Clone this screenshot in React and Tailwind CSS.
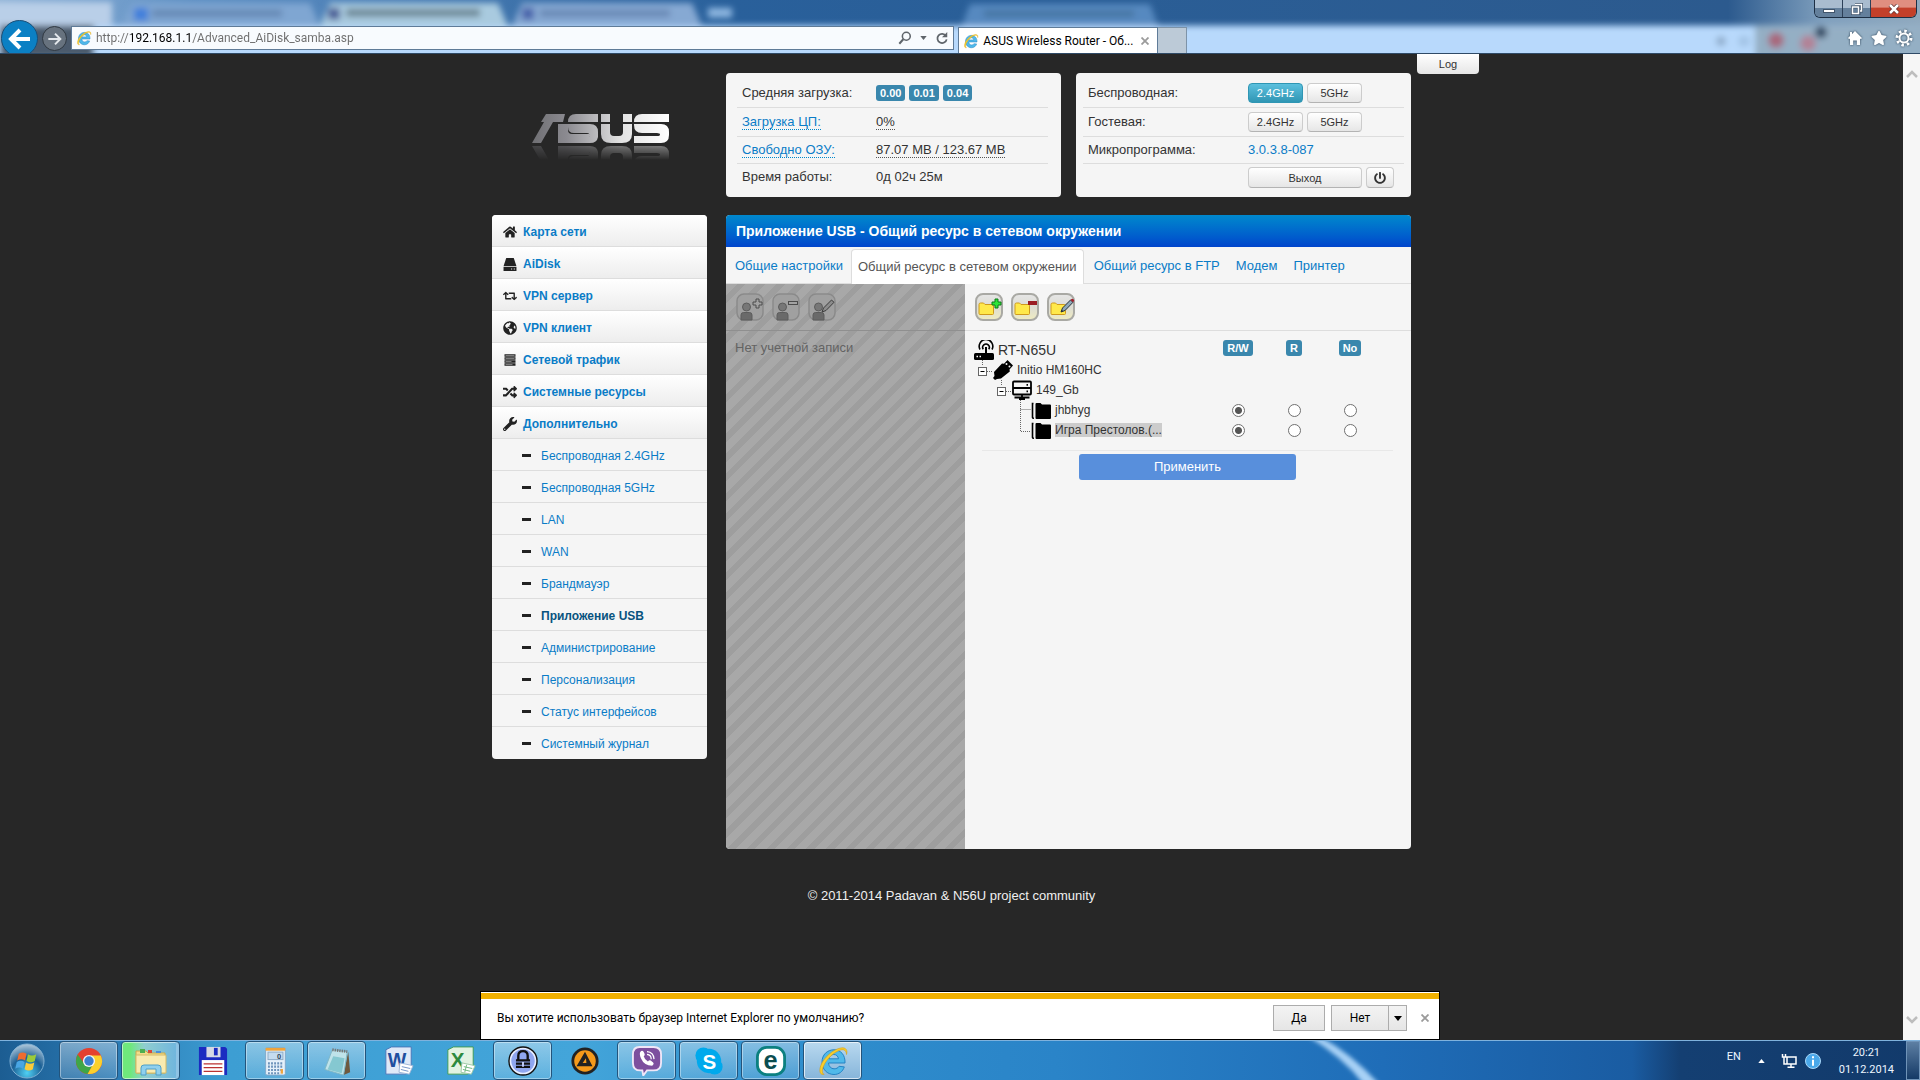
import React from "react";
import { FaHome, FaRetweet, FaGlobeAmericas, FaRandom, FaWrench, FaPowerOff, FaStar } from "react-icons/fa";

const ieFont = "font-['Roboto','Noto_Sans',sans-serif]";

function IeIcon({ className }) {
  return (
    <svg viewBox="0 0 32 32" className={className} aria-hidden="true">
      <path
        d="M28 18H11.500c.3 3.600 2.600 5.800 5.600 5.800 2.300 0 4-.9 5-2.500l5.200.6C25.700 26.600 22 29.500 17 29.500 10.200 29.500 5 24.200 5 17S10.200 4.800 17 4.800 28.400 10 28 18zM11.800 13.800h9.700c-.4-2.700-2.200-4.300-4.800-4.300s-4.400 1.600-4.900 4.300z"
        fill="#4fb9ea"
        stroke="#2583c4"
        strokeWidth="1"
      />
      <path
        d="M29.500 9.500c1.300-4-.4-7.300-5.200-6.600C16 4 6.500 13 3.800 20.500 1.800 26 3 30.500 7.200 29.300c-2.300-.6-2.400-4-.6-8.300C9.800 13.500 17.600 6.500 23.800 4.900c3.400-.9 5.600.8 5.700 4.600z"
        fill="#f8cf2c"
        stroke="#d69c12"
        strokeWidth=".6"
      />
    </svg>
  );
}

/* ---------- Browser frame ---------- */

function GlassBackdrop() {
  return (
    <svg className="absolute inset-0 h-full w-full" viewBox="0 0 1920 54" preserveAspectRatio="none" aria-hidden="true">
      <defs>
        <linearGradient id="glassTop" x1="0" x2="1">
          <stop offset="0" stopColor="#8fb2d6" />
          <stop offset=".1" stopColor="#5f90c4" />
          <stop offset=".38" stopColor="#29609b" />
          <stop offset=".9" stopColor="#2c5a8e" />
          <stop offset=".95" stopColor="#7f9fbd" />
          <stop offset="1" stopColor="#8fa9be" />
        </linearGradient>
        <filter id="soft" x="-10%" y="-60%" width="120%" height="220%">
          <feGaussianBlur stdDeviation="3" />
        </filter>
      </defs>
      <rect width="1920" height="54" fill="url(#glassTop)" />
      <g filter="url(#soft)">
        <rect x="-10" y="26" width="2000" height="40" fill="#b8d9fc" />
        <rect x="1755" y="26" width="200" height="40" fill="#94afc4" />
        <path d="M-10 2h122v24H-10z" fill="#b9cfe8" />
        <path d="M132 3h178l10 24H122z" fill="#7fa6d2" />
        <path d="M330 3h168l10 24H320z" fill="#a9cadf" />
        <path d="M522 3h170l10 24H512z" fill="#86a9d3" />
        <path d="M970 4h180l8 22H962z" fill="#5689c0" />
        <rect x="134" y="8" width="14" height="13" fill="#3f7fdb" />
        <rect x="152" y="10" width="130" height="7" fill="#6587b3" />
        <rect x="328" y="8" width="12" height="12" fill="#4b5f98" />
        <rect x="346" y="9" width="134" height="8" fill="#6d8796" />
        <rect x="522" y="8" width="12" height="12" fill="#4a64ab" />
        <rect x="540" y="10" width="130" height="7" fill="#6887b4" />
        <rect x="708" y="8" width="24" height="10" fill="#8db6e0" />
        <rect x="984" y="11" width="150" height="6" fill="#44729f" />
        <rect x="0" y="26" width="94" height="34" fill="#4b5a6c" />
        <circle cx="1721" cy="42" r="5" fill="#8faccb" />
        <circle cx="1744" cy="42" r="6" fill="#a3c4e6" />
        <circle cx="1776" cy="41" r="8" fill="#a8677c" />
        <circle cx="1808" cy="44" r="8" fill="#b28296" />
        <circle cx="1821" cy="33" r="6" fill="#2f4560" />
      </g>
    </svg>
  );
}

function WindowButtons() {
  return (
    <div className="absolute right-[3px] top-0 flex h-[18px] w-[103px] overflow-hidden rounded-b-md border border-t-0 border-[#1d2f44]">
      <button type="button" aria-label="Свернуть" className="flex w-7 items-end justify-center border-r border-[#2c4058] bg-linear-to-b from-[#a9bccf] from-50% to-[#64809c] to-50% pb-1">
        <span className="h-1 w-3 border border-[#41556b] bg-white" />
      </button>
      <button type="button" aria-label="Развернуть" className="flex w-7 items-center justify-center border-r border-[#2c4058] bg-linear-to-b from-[#a9bccf] from-50% to-[#64809c] to-50%">
        <svg viewBox="0 0 12 12" className="size-3" fill="none">
          <path d="M4 1h7v7H9M1 4h7v7H1z" stroke="#41556b" strokeWidth="3" />
          <path d="M4 1.500h6.500V8H9M1.500 4h6v6.500h-6z" stroke="#fff" strokeWidth="1.500" />
        </svg>
      </button>
      <button type="button" aria-label="Закрыть окно" className="flex flex-1 items-center justify-center bg-linear-to-b from-[#e08f80] from-40% to-[#c3402a] to-50%">
        <svg viewBox="0 0 12 10" className="h-2.5 w-3" fill="none">
          <path d="M2 1l8 8M10 1L2 9" stroke="#5b2b2b" strokeWidth="4" />
          <path d="M2 1l8 8M10 1L2 9" stroke="#fff" strokeWidth="2.500" />
        </svg>
      </button>
    </div>
  );
}

function BrowserBar() {
  return (
    <header className={`relative h-[54px] shrink-0 overflow-hidden border-b border-[#2f4a66] text-xs ${ieFont}`}>
      <GlassBackdrop />
      <WindowButtons />
      <div className="relative flex h-full items-end pt-5">
        <button type="button" aria-label="Назад" className="ml-px -mb-1 flex size-[37px] shrink-0 items-center justify-center rounded-full border border-[#1a4f77] bg-[#0b80c4]">
          <svg viewBox="0 0 24 24" className="size-6" fill="none" stroke="#fff" strokeWidth="4">
            <path d="M22 12H4M12 3l-9 9 9 9" />
          </svg>
        </button>
        <button type="button" aria-label="Вперёд" className="mb-0.5 ml-1 flex size-[25px] shrink-0 items-center justify-center rounded-full border border-[#2f3841] bg-[#67727e]">
          <svg viewBox="0 0 24 24" className="size-4" fill="none" stroke="#e4e8ec" strokeWidth="3">
            <path d="M2 12h18M12 4l8 8-8 8" />
          </svg>
        </button>
        <form className="mb-[3px] ml-1 flex h-6 w-[46%] items-center gap-1 border border-[#5f7b98] bg-[#f8fbfe] px-1" onSubmit={(e) => e.preventDefault()}>
          <IeIcon className="size-4 shrink-0" />
          <input
            type="text"
            aria-label="Адрес"
            defaultValue="http://192.168.1.1/Advanced_AiDisk_samba.asp"
            className="min-w-0 flex-1 bg-[linear-gradient(90deg,#6d6d6d_0_35px,#000_35px_94px,#6d6d6d_94px)] bg-clip-text text-transparent outline-none"
          />
          <button type="button" aria-label="Поиск">
            <svg viewBox="0 0 16 16" className="size-3.5" fill="none" stroke="#5f656b" strokeWidth="1.800">
              <circle cx="9.500" cy="6" r="4.500" />
              <path d="M6 9.500L1.500 14.500" strokeWidth="2.400" />
            </svg>
          </button>
          <button type="button" aria-label="Список адресов" className="px-1">
            <svg viewBox="0 0 8 5" className="h-1 w-[7px]"><path d="M0 0h8L4 5z" fill="#5f656b" /></svg>
          </button>
          <button type="button" aria-label="Обновить">
            <svg viewBox="0 0 16 16" className="size-3.5" fill="none" stroke="#5f656b" strokeWidth="2">
              <path d="M12.500 5.500A5.300 5.300 0 1 0 13.300 9.500" />
              <path d="M14 1v6H8z" fill="#5f656b" stroke="none" />
            </svg>
          </button>
        </form>
        <div className="ml-1 flex h-[26px] w-[200px] shrink-0 items-center gap-1 border-x border-t border-[#5f7b98] bg-white px-1">
          <IeIcon className="size-4 shrink-0" />
          <span className="flex-1 whitespace-nowrap text-black">ASUS Wireless Router - Об...</span>
          <button type="button" aria-label="Закрыть вкладку" className="px-1">
            <svg viewBox="0 0 8 8" className="size-2" stroke="#9b9b9b" strokeWidth="1.800"><path d="M.5.5l7 7M7.500.5l-7 7" /></svg>
          </button>
        </div>
        <button type="button" aria-label="Новая вкладка" className="h-[26px] w-[29px] border-r border-t border-[#7d93a8] bg-[#bccad7]" />
        <nav className="mb-1.5 ml-auto mr-[7px] flex items-center gap-2 text-white">
          <button type="button" aria-label="Домой">
            <svg viewBox="0 0 16 16" className="size-4 drop-shadow-[0_0_1px_#23384d]" fill="#fff">
              <path d="M8 1l7 7-1.200 1.200L13 8.500V15H9.800v-4.500H6.200V15H3V8.500l-.8.7L1 8l2-2V2h2v2z" />
            </svg>
          </button>
          <button type="button" aria-label="Избранное"><FaStar className="size-4 drop-shadow-[0_0_1px_#23384d]" /></button>
          <button type="button" aria-label="Сервис">
            <svg viewBox="0 0 18 18" className="size-[18px] drop-shadow-[0_0_1px_#23384d]" fill="none" stroke="#fff">
              <circle cx="9" cy="9" r="4.500" strokeWidth="2" />
              <circle cx="9" cy="9" r="7" strokeWidth="3" strokeDasharray="2.500 3" />
            </svg>
          </button>
        </nav>
      </div>
    </header>
  );
}

/* ---------- Router page ---------- */

function AsusLogo() {
  const mark = (
    <>
      <path d="M14 0H33L31 8H21L9 29H0L12 8H9Z" />
      <path d="M26 10h10v6q0 4 4 4h17q2 0 2 1.500T57 23H26Z" />
      <path d="M26 23h40q-1 6-8 6H26z" />
      <path d="M36 8q0-8 8-8H66V8z" />
      <path d="M36 10H58q8 0 8 8v5H58q0-4-3-4H42q-6 0-6-6z" />
      <path d="M69 0h9v8h-9zM91 0h9v8h-9z" />
      <path d="M69 10h9v8q0 4 4 4h5q4 0 4-4v-8h9v10q0 9-10 9H79q-10 0-10-9z" />
      <path d="M102 8q0-8 8-8h27v8z" />
      <path d="M102 10h27q8 0 8 8v3q0 8-8 8h-27v-7h23q3 0 3-1.500T125 19h-15q-8 0-8-8z" />
    </>
  );
  return (
    <svg viewBox="0 0 138 46" className="h-[46px] w-[138px]" role="img" aria-label="ASUS">
      <defs>
        <linearGradient id="chrome" gradientUnits="userSpaceOnUse" x1="0" y1="0" x2="137" y2="0">
          <stop offset="0" stopColor="#6f6f73" />
          <stop offset=".25" stopColor="#8b8a90" />
          <stop offset=".65" stopColor="#e2e2e2" />
          <stop offset="1" stopColor="#ffffff" />
        </linearGradient>
        <linearGradient id="fade" gradientUnits="userSpaceOnUse" x1="0" y1="30" x2="0" y2="46">
          <stop offset="0" stopColor="#fff" stopOpacity=".45" />
          <stop offset="1" stopColor="#fff" stopOpacity="0" />
        </linearGradient>
        <mask id="reflect"><rect y="30" width="138" height="16" fill="url(#fade)" /></mask>
      </defs>
      <g fill="url(#chrome)">{mark}</g>
      <g mask="url(#reflect)"><g fill="url(#chrome)" transform="translate(0 61) scale(1 -1)">{mark}</g></g>
    </svg>
  );
}

const btn = "rounded border border-[#ccc] border-b-[#b3b3b3] bg-linear-to-b from-white to-[#e6e6e6] text-[11px] leading-4 text-[#333]";
const badge = "rounded-[3px] bg-[#3a87ad] px-1 text-[11px] leading-4 font-bold text-white";
const cell = "border-b border-[#ddd]";

function StatusPanel() {
  return (
    <section className="rounded bg-[#f5f5f5] py-1.5 pl-[11px] pr-[13px]">
      <table className="w-full border-separate border-spacing-0 text-left text-[13px]">
        <tbody>
          <tr className="h-[29px]">
            <th scope="row" className={`w-[139px] pl-[5px] font-normal ${cell}`}>Средняя загрузка:</th>
            <td className={cell}>
              <span className="flex gap-1">
                <span className={badge}>0.00</span>
                <span className={badge}>0.01</span>
                <span className={badge}>0.04</span>
              </span>
            </td>
          </tr>
          <tr className="h-[29px]">
            <th scope="row" className={`pl-[5px] font-normal ${cell}`}><a href="#cpu" className="border-b border-dotted border-[#0088cc] text-[#0a7cc7]">Загрузка ЦП:</a></th>
            <td className={cell}><span className="border-b border-dotted border-[#555]">0%</span></td>
          </tr>
          <tr className="h-[27px]">
            <th scope="row" className={`pl-[5px] font-normal ${cell}`}><a href="#ram" className="border-b border-dotted border-[#0088cc] text-[#0a7cc7]">Свободно ОЗУ:</a></th>
            <td className={cell}><span className="border-b border-dotted border-[#555]">87.07 MB / 123.67 MB</span></td>
          </tr>
          <tr className="h-[27px]">
            <th scope="row" className="pb-0.5 pl-[5px] font-normal">Время работы:</th>
            <td className="pb-0.5">0д 02ч 25м</td>
          </tr>
        </tbody>
      </table>
    </section>
  );
}

function WirelessPanel() {
  return (
    <section className="rounded bg-[#f5f5f5] px-[7px] py-1.5">
      <table className="w-full border-separate border-spacing-0 text-left text-[13px]">
        <tbody>
          <tr className="h-[29px]">
            <th scope="row" className={`w-[165px] pl-[5px] font-normal ${cell}`}>Беспроводная:</th>
            <td className={cell}>
              <span className="flex gap-1">
                <button type="button" className="h-5 w-[55px] rounded border border-[#2f96b4] bg-linear-to-b from-[#5bc0de] to-[#2f96b4] text-[11px] leading-4 text-white">2.4GHz</button>
                <button type="button" className={`h-5 w-[55px] ${btn}`}>5GHz</button>
              </span>
            </td>
          </tr>
          <tr className="h-[29px]">
            <th scope="row" className={`pl-[5px] font-normal ${cell}`}>Гостевая:</th>
            <td className={cell}>
              <span className="flex gap-1">
                <button type="button" className={`h-5 w-[55px] ${btn}`}>2.4GHz</button>
                <button type="button" className={`h-5 w-[55px] ${btn}`}>5GHz</button>
              </span>
            </td>
          </tr>
          <tr className="h-[27px]">
            <th scope="row" className={`pl-[5px] font-normal ${cell}`}>Микропрограмма:</th>
            <td className={cell}><a href="#firmware" className="text-[#0a7cc7]">3.0.3.8-087</a></td>
          </tr>
          <tr className="h-[27px]">
            <td />
            <td>
              <span className="flex gap-1">
                <button type="button" className={`h-[21px] w-[114px] ${btn}`}>Выход</button>
                <button type="button" aria-label="Перезагрузка" className={`flex h-[21px] w-7 items-center justify-center ${btn}`}><FaPowerOff className="size-3" /></button>
              </span>
            </td>
          </tr>
        </tbody>
      </table>
    </section>
  );
}

function HddIcon({ className }) {
  return (
    <svg viewBox="0 0 13 13" className={className} fill="currentColor">
      <path d="M3 1h7l2.500 7.500H.5z" />
      <path fillRule="evenodd" d="M.5 9.300h12V13H.5zM7.500 10.700v1h1v-1zM10 10.700v1h1v-1z" />
    </svg>
  );
}

function StackIcon({ className }) {
  return (
    <svg viewBox="0 0 14 14" className={className} fill="none" stroke="currentColor">
      <path d="M1.500 2.500h11M1.500 5.500h11M1.500 8.500h11M1.500 11.500h11" strokeWidth="2.400" />
      <path d="M2.500 2.500h9M2.500 5.500h9M2.500 8.500h6M2.500 11.500h7" stroke="#bbb" strokeWidth=".6" />
    </svg>
  );
}

const mainLinks = [
  ["Карта сети", FaHome],
  ["AiDisk", HddIcon],
  ["VPN сервер", FaRetweet],
  ["VPN клиент", FaGlobeAmericas],
  ["Сетевой трафик", StackIcon],
  ["Системные ресурсы", FaRandom],
  ["Дополнительно", FaWrench],
];

const subLinks = [
  "Беспроводная 2.4GHz",
  "Беспроводная 5GHz",
  "LAN",
  "WAN",
  "Брандмауэр",
  "Приложение USB",
  "Администрирование",
  "Персонализация",
  "Статус интерфейсов",
  "Системный журнал",
];

function Sidebar() {
  return (
    <nav className="w-[215px] shrink-0 self-start overflow-hidden rounded bg-[#f5f5f5] pb-px text-xs">
      <ul>
        {mainLinks.map(([label, Icon]) => (
          <li key={label}>
            <a href="#menu" className="flex h-8 items-center gap-1.5 border-b border-[#ddd] bg-linear-to-b from-white to-[#ededed] pl-[11px] pt-0.5 font-bold text-[#0a7cc7]">
              <Icon className="size-[14px] text-[#222]" />
              {label}
            </a>
          </li>
        ))}
        {subLinks.map((label) => (
          <li key={label} className="border-b border-[#ddd] last:border-b-0">
            <a
              href="#submenu"
              className={label === "Приложение USB" ? "flex h-[31px] items-center gap-2.5 pl-[30px] pt-0.5 font-bold text-[#08537f]" : "flex h-[31px] items-center gap-2.5 pl-[30px] pt-0.5 text-[#0a7cc7]"}
            >
              <span className="h-[3px] w-[9px] bg-[#222]" />
              {label}
            </a>
          </li>
        ))}
      </ul>
    </nav>
  );
}

function Folder() {
  return (
    <path d="M4 11.500q0-1.500 1.500-1.500h3l1.500 1.500h7.500q1 0 1 1v8q0 1-1 1H5q-1 0-1-1z" fill="#ffe94a" stroke="#cf9a1d" />
  );
}

const folderTools = [
  ["Создать папку", <path key="a" d="M20 6h3v3h3v3h-3v3h-3v-3h-3V9h3z" fill="#2ee33a" stroke="#0b7a17" />],
  ["Удалить папку", <rect key="b" x="17" y="8" width="9" height="4" fill="#9b1d25" />],
  ["Изменить папку", (
    <g key="c">
      <path d="M14 19l1.500-4L23.500 7l2.500 2.300L18 17.500z" fill="#8fa9ba" stroke="#24303a" />
      <path d="M14 19l.8-2.200 1.500 1.400z" fill="#24303a" />
      <path d="M23.500 7l1-1q1-.7 2 .3t.4 2l-.9 1z" fill="#a0202c" />
    </g>
  )],
];

const userTools = [
  ["Создать пользователя", <path key="a" d="M20 6h3v3h3v3h-3v3h-3v-3h-3V9h3z" fill="#a3a3a3" stroke="#4c4c4c" />],
  ["Удалить пользователя", <rect key="b" x="16.500" y="8.500" width="9" height="3" fill="#a3a3a3" stroke="#4c4c4c" />],
  ["Изменить пользователя", <path key="c" d="M14 19l1.500-4L23.500 7l2.500 2.300L18 17.500z" fill="#8c8c8c" stroke="#3c3c3c" />],
];

function ShareTree() {
  const radioCls = "m-0 size-[13px] appearance-none rounded-full border border-[#707070] bg-white checked:bg-[radial-gradient(circle,#555_0_3px,#fff_4px)]";
  const rows = [
    { icon: <RouterIcon />, label: "RT-N65U", level: 0, head: true },
    { icon: <UsbIcon />, label: "Initio HM160HC", level: 1, toggle: true },
    { icon: <DriveIcon />, label: "149_Gb", level: 2, toggle: true },
    { icon: <FoldersIcon />, label: "jhbhyg", level: 3, share: true },
    { icon: <FoldersIcon />, label: "Игра Престолов.(...", level: 3, share: true, last: true },
  ];
  return (
    <div className="pl-[9px] pr-[33px] pt-[9px]" role="tree" aria-label="Общие ресурсы">
      {rows.map((r) => (
        <div key={r.label} role="treeitem" className="grid h-5 grid-cols-[1fr_56px_56px_56px] items-center">
          <div className="flex h-5 items-center">
            {r.level > 1 && <Indent level={r.level} />}
            {r.toggle && (
              <button type="button" aria-label="Свернуть ветку">
                <svg viewBox="0 0 19 20" className="block h-5 w-[19px]" fill="none" stroke="#666">
                  <path d="M8.500 0v6M13 11.500h6" strokeDasharray="1 1" />
                  <rect x="4.500" y="7.500" width="8" height="8" fill="#fff" />
                  <path d="M6.500 11.500h4" stroke="#000" />
                </svg>
              </button>
            )}
            {r.share && (
              <svg viewBox="0 0 19 20" className="block h-5 w-[19px]" fill="none" stroke="#666" strokeDasharray="1 1" aria-hidden="true">
                <path d={r.last ? "M8.500 0v11.500H19" : "M8.500 0v20M8.500 9.500H19"} />
              </svg>
            )}
            {r.icon}
            <span className={r.head ? "pl-1 text-sm leading-4" : r.last ? "ml-1 bg-[#ccc] text-[12px] leading-[14px]" : "pl-1 text-[12px] leading-4"}>{r.label}</span>
          </div>
          {r.head && ["R/W", "R", "No"].map((t) => (
            <span key={t} className={`self-start justify-self-center ${badge}`}>{t}</span>
          ))}
          {r.share && ["R/W", "R", "No"].map((t) => (
            <input key={t} type="radio" name={r.label} aria-label={`${r.label}: ${t}`} defaultChecked={t === "R/W"} className={`justify-self-center ${radioCls}`} />
          ))}
        </div>
      ))}
    </div>
  );
}

function Indent({ level }) {
  return <span className={level === 2 ? "w-[19px]" : "w-[38px]"} />;
}

function RouterIcon() {
  return (
    <svg viewBox="0 0 20 20" className="size-5 shrink-0" aria-hidden="true">
      <rect x="0" y="13" width="20" height="7" rx="1.500" fill="#000" />
      <path d="M2.500 16.500h1.500M5.500 16.500h1.500" stroke="#fff" strokeWidth="1.500" />
      <path d="M12 7v7" stroke="#000" strokeWidth="2" />
      <path d="M9.300 9.300a3.300 3.300 0 1 1 5.400 0M6 9.500a6.800 6.800 0 1 1 12 0" fill="none" stroke="#000" strokeWidth="1.600" />
    </svg>
  );
}

function UsbIcon() {
  return (
    <svg viewBox="0 0 20 20" className="size-5 shrink-0" aria-hidden="true">
      <path d="M1 12l8-8.500 2 .2L14.500 0 20 5.500l-3.500 4 .3 2L8 18.500l-4 .5-2 1-2-2 1.500-2z" fill="#000" />
      <circle cx="13.500" cy="4" r="1" fill="#f5f5f5" />
      <circle cx="16.500" cy="6.500" r="1" fill="#f5f5f5" />
    </svg>
  );
}

function DriveIcon() {
  return (
    <svg viewBox="0 0 20 20" className="size-5 shrink-0" fill="none" stroke="#000" strokeWidth="1.800" aria-hidden="true">
      <rect x="1" y="1.500" width="18" height="13" rx="1" />
      <path d="M1 8h18M10 14v5M2.500 17.500h15M7 19.200h6" />
      <path d="M14.500 4.800H16M14.500 11.300H16" />
    </svg>
  );
}

function FoldersIcon() {
  return (
    <svg viewBox="0 0 20 20" className="size-5 shrink-0" aria-hidden="true">
      <path d="M4.500 4q0-1 1-1h4l1.500 1.500h8q1 0 1 1V18q0 1-1 1H5.500q-1 0-1-1z" fill="#000" />
      <path d="M2.500 3.500H1.500v14q0 .8 1.500.8" fill="none" stroke="#000" strokeWidth="1.600" />
    </svg>
  );
}

function MainPanel() {
  return (
    <main className="flex min-h-[634px] min-w-0 flex-1 flex-col overflow-hidden rounded bg-[#f5f5f5]">
      <h1 className="bg-linear-to-b from-[#0088cc] to-[#0044cc] pl-2.5 text-sm leading-8 font-bold text-white">
        Приложение USB - Общий ресурс в сетевом окружении
      </h1>
      <nav className="flex h-[37px] items-end border-b border-[#ddd] pl-0.5 text-[13px] text-[#0a7cc7]">
        <a href="#general" className="px-[7px] leading-[35px]">Общие настройки</a>
        <a href="#samba" aria-current="page" className="-mb-px ml-px rounded-t border border-b-0 border-[#ddd] bg-white px-1.5 leading-[34px] text-[#555]">Общий ресурс в сетевом окружении</a>
        <a href="#ftp" className="ml-0.5 px-2 leading-[35px]">Общий ресурс в FTP</a>
        <a href="#modem" className="px-2 leading-[35px]">Модем</a>
        <a href="#printer" className="px-2 leading-[35px]">Принтер</a>
      </nav>
      <div className="flex flex-1">
        <section className="w-[239px] shrink-0 bg-[repeating-linear-gradient(135deg,#a8a8a8_0_8px,#9e9e9e_8px_14px)]">
          <div className="flex h-[47px] items-center gap-2 border-b border-[#8f8f8f] pl-2.5">
            {userTools.map(([label, extra]) => (
              <button key={label} type="button" aria-label={label} disabled>
                <svg viewBox="0 0 28 28" className="size-7">
                  <rect x="1" y="1" width="26" height="26" rx="7" fill="#a0a0a0" stroke="#8a8a8a" strokeWidth="1.500" />
                  <circle cx="10.500" cy="14" r="4" fill="#777" stroke="#5c5c5c" />
                  <path d="M5 27v-5q0-2.500 2.500-2.500h6q2.500 0 2.500 2.500v5z" fill="#6a6a6a" stroke="#5c5c5c" />
                  {extra}
                </svg>
              </button>
            ))}
          </div>
          <p className="pl-[9px] text-[13px] leading-[34px] text-[#636363]">Нет учетной записи</p>
        </section>
        <section className="flex-1">
          <div className="flex h-[47px] items-center gap-2 border-b border-[#ddd] pl-2.5">
            {folderTools.map(([label, extra]) => (
              <button key={label} type="button" aria-label={label}>
                <svg viewBox="0 0 28 28" className="size-7">
                  <defs>
                    <linearGradient id="toolBg" x2="0" y2="1"><stop stopColor="#e6e6e6" /><stop offset=".5" stopColor="#dcdcd4" /><stop offset="1" stopColor="#f0ecc0" /></linearGradient>
                  </defs>
                  <rect x="1" y="1" width="26" height="26" rx="7" fill="url(#toolBg)" stroke="#a9a9a4" strokeWidth="2" />
                  <Folder />
                  {extra}
                </svg>
              </button>
            ))}
          </div>
          <ShareTree />
          <div className="ml-[17px] mr-[18px] mt-2.5 border-t border-[#e8e8e8] pt-[3px] text-center">
            <button type="button" className="h-[26px] w-[217px] rounded-[3px] bg-[#588fdc] text-[13px] text-white">Применить</button>
          </div>
        </section>
      </div>
    </main>
  );
}

function RouterPage() {
  return (
    <div className="relative flex min-h-0 flex-1 bg-[#272727] font-['Liberation_Sans',Arial,sans-serif] text-[#333]">
      <div className="min-w-0 flex-1 overflow-hidden">
        <div className="relative mx-auto flex w-full max-w-[919px] flex-col gap-[18px] pt-[19px]">
          <button type="button" className="absolute left-full top-0 ml-1.5 h-5 w-[62px] rounded-b bg-linear-to-b from-white to-[#e6e6e6] text-[11px]">Log</button>
          <div className="flex gap-[19px]">
            <a href="#home" className="w-[215px] shrink-0 pl-10 pt-[41px]"><AsusLogo /></a>
            <div className="grid flex-1 grid-cols-2 gap-[15px]">
              <StatusPanel />
              <WirelessPanel />
            </div>
          </div>
          <div className="flex gap-[19px]">
            <Sidebar />
            <MainPanel />
          </div>
          <footer className="pt-[19px] text-center text-[13px] leading-5 text-[#f0f0f0]">© 2011-2014 Padavan &amp; N56U project community</footer>
        </div>
      </div>
      <div className="flex w-[17px] shrink-0 flex-col items-center justify-between bg-[#f6f6f6] py-4">
        {["M1 7l5-5 5 5", "M1 2l5 5 5-5"].map((d) => (
          <svg key={d} viewBox="0 0 12 9" className="h-[9px] w-3" fill="none" stroke="#bdbdbd" strokeWidth="2.500"><path d={d} /></svg>
        ))}
      </div>
      <DefaultBrowserBar />
    </div>
  );
}

function DefaultBrowserBar() {
  const face = "bg-linear-to-b from-[#f3f3f3] to-[#e6e6e6]";
  return (
    <div role="alert" className={`absolute inset-x-0 bottom-0 mx-auto w-1/2 border border-black bg-white text-xs text-black ${ieFont}`}>
      <div className="h-[7px] border-t border-white bg-[#f0b000]" />
      <div className="flex h-10 items-center pb-0.5 pl-4 pr-1.5">
        <p className="flex-1">Вы хотите использовать браузер Internet Explorer по умолчанию?</p>
        <button type="button" className={`mr-1.5 h-[26px] w-[52px] border border-[#acacac] ${face}`}>Да</button>
        <div className="flex h-[26px] border border-[#acacac]">
          <button type="button" className={`w-14 ${face}`}>Нет</button>
          <button type="button" aria-label="Варианты" className={`flex w-[18px] items-center justify-center border-l border-[#acacac] ${face}`}>
            <svg viewBox="0 0 8 5" className="h-[5px] w-2"><path d="M0 0h8L4 5z" /></svg>
          </button>
        </div>
        <button type="button" aria-label="Закрыть" className="ml-2.5 p-1">
          <svg viewBox="0 0 8 8" className="size-2" stroke="#9b9b9b" strokeWidth="1.800"><path d="M.5.5l7 7M7.500.5l-7 7" /></svg>
        </button>
      </div>
    </div>
  );
}

/* ---------- Taskbar ---------- */

const officeText = "font-['Liberation_Sans',Arial,sans-serif] font-bold";

const apps = [
  { name: "Google Chrome", open: true, icon: (
    <g>
      <circle cx="16" cy="16" r="14" fill="#e4402f" />
      <path d="M3.900 9A14 14 0 0 0 14.500 29.900L21 18.500 11 19z" fill="#3fa648" />
      <path d="M28.600 10A14 14 0 0 1 14.500 29.900L22 16.500 18 10z" fill="#fbd02c" />
      <circle cx="16" cy="16" r="6.500" fill="#f1f3f5" />
      <circle cx="16" cy="16" r="5" fill="#3c7fd0" />
    </g>
  ) },
  { name: "Проводник", open: true, green: true, icon: (
    <g>
      <path d="M1 6h10l2 2h17v20H1z" fill="#f2dd8b" stroke="#c9a94c" />
      <path d="M5 4h5v4H5z" fill="#4caf50" />
      <path d="M13 5h4v3h-4z" fill="#d94a3a" /><path d="M21 6h5v2h-5z" fill="#4a8edb" />
      <path d="M1 10h30v18H1z" fill="#f9ebb0" stroke="#d5ba66" />
      <path d="M6 30v-7q0-3 3-3h14q3 0 3 3v7h-5v-6H11v6z" fill="#8fd0ee" stroke="#4e9fc8" />
    </g>
  ) },
  { name: "Total Commander", icon: (
    <g>
      <path d="M1 1h28l2 2v28H1z" fill="#1b2cc1" />
      <rect x="9" y="1" width="15" height="11" fill="#d5d9e4" /><rect x="17" y="2" width="4" height="8" fill="#1b2cc1" />
      <rect x="4" y="15" width="24" height="16" fill="#fff" />
      <path d="M6 19h20M6 23h20M6 27h20" stroke="#b33" strokeWidth="1.200" />
    </g>
  ) },
  { name: "Калькулятор", open: true, icon: (
    <g>
      <rect x="6" y="2" width="21" height="29" rx="1.500" fill="#e6f1fa" stroke="#7fa6c9" />
      <rect x="6" y="2" width="21" height="3" fill="#f0a43c" />
      <rect x="8.500" y="6.500" width="16" height="8" fill="#c5dcef" stroke="#8aa9c5" />
      <text x="18" y="13.500" fontSize="8" fill="#33475c" className={officeText}>0</text>
      <path d="M8.500 18.500h16M8.500 22h16M8.500 25.500h16M8.500 29h12" stroke="#6c92ba" strokeWidth="2.200" strokeDasharray="2 1.300" />
      <path d="M22 24.500h2.500v5H22z" fill="#f0a43c" />
    </g>
  ) },
  { name: "Блокнот", open: true, icon: (
    <g>
      <path d="M28 6l2 22-7 3z" fill="#6f5a3f" />
      <path d="M11 4l16 2-4 25L3 25z" fill="#bfe3ea" stroke="#7fb6c4" />
      <path d="M12 11l12 2-3 16-15-4z" fill="#5fb6c0" opacity=".6" />
      <path d="M11 4l16 2" stroke="#767676" strokeWidth="3" strokeDasharray="1.500 1" />
    </g>
  ) },
  { name: "Microsoft Word", icon: (
    <g>
      <path d="M2 4L8 1h21v24l-6 5H2z" fill="#dfe9f8" stroke="#4a74b8" />
      <text x="4" y="22" fontSize="21" fill="#1f4f9f" className={officeText}>W</text>
      <path d="M17 18l14 3-4 9-11-2z" fill="#fff" stroke="#9db4d6" />
      <path d="M19 22l9 2M18 25l8 2" stroke="#6f90c4" />
    </g>
  ) },
  { name: "Microsoft Excel", icon: (
    <g>
      <path d="M2 4L8 1h21v24l-6 5H2z" fill="#e2f3e2" stroke="#3f9a52" />
      <text x="5" y="22" fontSize="22" fill="#2d8a3e" className={officeText}>X</text>
      <path d="M17 18l14 3-4 9-11-2z" fill="#fff" stroke="#9ccaa5" />
      <path d="M19 22l9 2M18 25l8 2M22 20l-2 8" stroke="#6cb67b" />
    </g>
  ) },
  { name: "KeePass", open: true, icon: (
    <g>
      <circle cx="16" cy="16" r="15" fill="#e9efff" stroke="#111" strokeWidth="1.500" />
      <circle cx="16" cy="16" r="12.500" fill="#8fa6ef" />
      <path d="M11 15v-4.500q0-5 5-5t5 5V15" fill="none" stroke="#111" strokeWidth="2.500" />
      <path d="M8.500 14h15v2.500h-15zM8.500 17.500h15V20h-15zM8.500 21h15v2.500h-15z" fill="#111" />
      <path d="M16 17v5" stroke="#c7d2ff" strokeWidth="2" />
    </g>
  ) },
  { name: "AIMP", icon: (
    <g>
      <circle cx="16" cy="16" r="14.500" fill="#222" /><circle cx="16" cy="16" r="11.500" fill="#f59a1b" />
      <path fillRule="evenodd" d="M16 6l8 15.500H7zm1 7l-3.500 5h4z" fill="#222" />
    </g>
  ) },
  { name: "Viber", open: true, icon: (
    <g>
      <path d="M8 1h15q8 0 8 8v9q0 8-8 8h-7l-4 5.500-1-5.500H9q-8 0-8-8V9q0-8 7-8z" fill="#7d4f9e" stroke="#efe6f7" strokeWidth="2" />
      <path d="M9 6q2-2 3.500.5l1 2q.5 1.500-1 2.500 1 4 4.500 5.500 1.500-2 3-1l2.500 2q1.500 1.500-1 3.500Q13 21 9.500 13 7.500 8 9 6z" fill="#fff" />
      <path d="M16 6q7 .5 7.500 8M16 9q4.500.5 4.500 5" fill="none" stroke="#fff" strokeWidth="1.300" />
    </g>
  ) },
  { name: "Skype", open: true, icon: (
    <g>
      <circle cx="10" cy="10" r="8.500" fill="#00a9ec" /><circle cx="22" cy="22" r="8.500" fill="#00a9ec" /><circle cx="16" cy="16" r="13" fill="#00a9ec" />
      <text x="9" y="24" fontSize="22" fill="#fff" className={officeText}>S</text>
    </g>
  ) },
  { name: "ESET", open: true, icon: (
    <g>
      <rect x="1.500" y="1.500" width="29" height="29" rx="10" fill="#fff" stroke="#0b8080" strokeWidth="3" />
      <text x="8" y="24" fontSize="27" fill="#0b4d50" className={officeText}>e</text>
    </g>
  ) },
  { name: "Internet Explorer", open: true, active: true, icon: "ie" },
];

function Taskbar() {
  return (
    <footer className={`relative flex h-10 shrink-0 items-stretch overflow-hidden border-t border-[#7fb2dd] bg-[linear-gradient(90deg,#1c5d92_0,#2b7bb5_6%,#3d9ed3_12%,#43a5da_30%,#2f8ecd_42%,#2a84c8_55%,#1f6db8_72%,#1a5ca2_85%,#143f72_87.5%,#123a6b_100%)] text-[#eef6ff] ${ieFont}`}>
      <svg className="absolute left-[68%] top-0 h-full w-20" viewBox="0 0 80 40" aria-hidden="true">
        <defs><filter id="streakBlur"><feGaussianBlur stdDeviation="2" /></filter></defs>
        <path d="M2-4h12q30 16 60 48H58Q36 16 2-4z" fill="#a8d2f6" filter="url(#streakBlur)" />
      </svg>
      <button type="button" aria-label="Пуск" className="mr-3.5 ml-2 flex w-[37px] items-center justify-center">
        <svg viewBox="0 0 37 37" className="size-9">
          <defs><radialGradient id="orb" cx=".5" cy=".85" r=".9"><stop stopColor="#4fd0f4" /><stop offset=".5" stopColor="#1b5f94" /><stop offset="1" stopColor="#c4d6e4" /></radialGradient></defs>
          <circle cx="18.500" cy="18.500" r="17.500" fill="url(#orb)" stroke="#7fb0d3" />
          <path d="M10 11q4-2.500 8 0l-1.500 7q-4-2.500-8 0z" fill="#ef6c2f" />
          <path d="M19.500 11.500q4 2.500 8.500 0l-1.500 7q-4 2.500-8.500 0z" fill="#9ccb3a" />
          <path d="M8 19.500q4-2.500 8 0l-1.500 7q-4-2.500-8 0z" fill="#49a6e4" />
          <path d="M17.500 20q4 2.500 8.500 0l-1.500 7q-4 2.500-8.500 0z" fill="#fbcb3a" />
        </svg>
      </button>
      <div className="flex gap-[3px]">
        {apps.map((a) => (
          <button
            key={a.name}
            type="button"
            aria-label={a.name}
            className={
              a.green
                ? "flex w-[59px] items-center justify-center rounded-sm border border-[#23547c] bg-linear-to-r from-[#6fe87c] from-15% via-[#8fcdd0] via-40% to-[#6eb4de] shadow-[inset_-4px_0_0_-1px_#8fc3e4,inset_0_0_0_1px_#ffffff88]"
                : a.active
                  ? "flex w-[59px] items-center justify-center rounded-sm border border-[#23547c] bg-linear-to-b from-[#b9d9ef] to-[#86b5da] shadow-[inset_0_0_0_1px_#ffffffaa]"
                  : a.open
                    ? "flex w-[59px] items-center justify-center rounded-sm border border-[#23547c] bg-linear-to-b from-[#ffffff66] to-[#ffffff22] shadow-[inset_0_0_0_1px_#ffffff66]"
                    : "flex w-[59px] items-center justify-center"
            }
          >
            {a.icon === "ie" ? <IeIcon className="size-8" /> : <svg viewBox="0 0 32 32" className={a.green ? "size-8" : "size-[30px]"}>{a.icon}</svg>}
          </button>
        ))}
      </div>
      <div className="relative ml-auto flex items-center text-[11px]">
        <span className="pb-1.5">EN</span>
        <button type="button" aria-label="Скрытые значки" className="ml-[17px]">
          <svg viewBox="0 0 8 5" className="h-1 w-[7px]"><path d="M0 5h8L4 0z" fill="#fff" /></svg>
        </button>
        <svg viewBox="0 0 16 16" className="ml-4 size-4" fill="none" stroke="#fff" strokeWidth="1.500" aria-hidden="true">
          <path d="M6 4h9v7H6zM10 11v3M6.500 14.200h7M1.500 1v3h3V1M3 4v7h3" />
        </svg>
        <svg viewBox="0 0 16 16" className="ml-2 size-4" aria-hidden="true">
          <circle cx="8" cy="8" r="7.500" fill="#4aa8ea" stroke="#a7d8fa" />
          <path d="M8 3.200v2M8 6.700v6" stroke="#fff" strokeWidth="2" />
        </svg>
        <div className="ml-[18px] mr-3 text-center leading-[17px]">
          <div>20:21</div>
          <div>01.12.2014</div>
        </div>
        <button type="button" aria-label="Показать рабочий стол" className="h-full w-3.5 border border-[#6f93b8] bg-linear-to-b from-[#5d7fa3] to-[#143a66]" />
      </div>
    </footer>
  );
}

export default function App() {
  return (
    <div className="flex h-screen min-h-[860px] w-full flex-col overflow-hidden">
      <BrowserBar />
      <RouterPage />
      <Taskbar />
    </div>
  );
}
